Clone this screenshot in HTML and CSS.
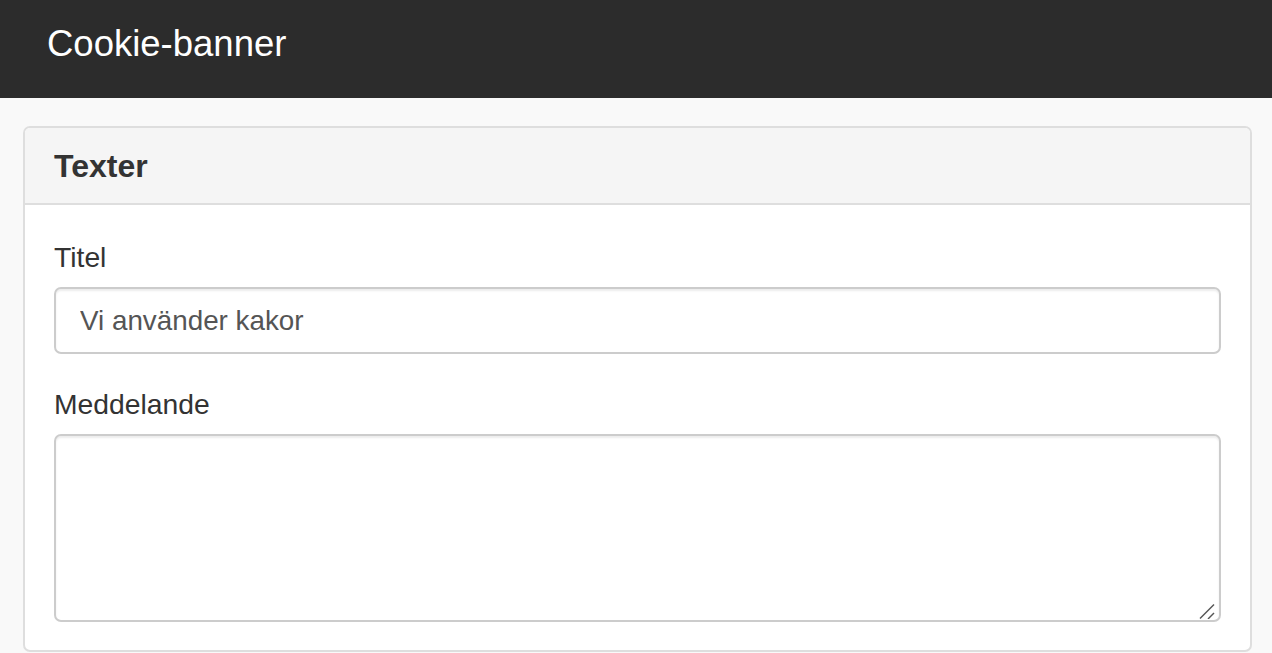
FILE: index.html
```html
<!DOCTYPE html>
<html lang="sv">
<head>
<meta charset="utf-8">
<title>Cookie-banner</title>
<link rel="stylesheet" href="styles.css">
</head>
<body>
<header class="navbar">
  <span class="brand">Cookie-banner</span>
</header>
<main class="main">
  <section class="panel">
    <div class="panel-heading">
      <h2 class="panel-title">Texter</h2>
    </div>
    <div class="panel-body">
      <div class="form-group">
        <label class="label" for="title">Titel</label>
        <input class="control" id="title" type="text" value="Vi använder kakor">
      </div>
      <div class="form-group last">
        <label class="label" for="msg">Meddelande</label>
        <div class="area-wrap">
          <textarea class="control area" id="msg"></textarea>
          <svg class="grip" width="16" height="16" viewBox="0 0 16 16" aria-hidden="true">
            <line x1="1" y1="15.5" x2="15" y2="1.5" stroke="#555" stroke-width="1.4"/>
            <line x1="9" y1="16" x2="15" y2="10" stroke="#555" stroke-width="1.4"/>
          </svg>
        </div>
      </div>
    </div>
  </section>
</main>
</body>
</html>
```
FILE: styles.css
```css
html, body {
  margin: 0;
  padding: 0;
}
body {
  background: #f9f9f9;
  color: #333;
  font-family: "Liberation Sans", Arial, Helvetica, sans-serif;
}
.navbar {
  height: 98px;
  box-sizing: border-box;
  background: #2c2c2c;
  padding: 24px 0 0 47px;
}
.brand {
  display: block;
  color: #fff;
  font-size: 36.5px;
  line-height: 40px;
}
.main {
  padding: 28px 20px 0 23px;
}
.panel {
  background: #fff;
  border: 2px solid #dedede;
  border-radius: 7px;
  overflow: hidden;
}
.panel-heading {
  height: 75px;
  box-sizing: content-box;
  background: #f5f5f5;
  border-bottom: 2px solid #dedede;
  display: flex;
  align-items: center;
  padding: 0 29px;
}
.panel-title {
  margin: 0;
  font-size: 32px;
  font-weight: bold;
  color: #333;
  line-height: 36px;
}
.panel-body {
  padding: 33px 29px 28px 29px;
}
.form-group {
  margin-bottom: 31px;
}
.form-group.last {
  margin-bottom: 0;
}
.label {
  display: block;
  font-size: 28.3px;
  line-height: 38px;
  margin-bottom: 11px;
  color: #333;
}
.control {
  display: block;
  width: 100%;
  box-sizing: border-box;
  height: 67px;
  border: 2px solid #cccccc;
  border-radius: 7px;
  padding: 0 24px;
  font-family: "Liberation Sans", Arial, Helvetica, sans-serif;
  font-size: 27.8px;
  color: #555;
  background: #fff;
  box-shadow: inset 0 2px 2px rgba(0, 0, 0, 0.075);
  outline: none;
  margin: 0;
}
.area-wrap {
  position: relative;
}
.area {
  height: 188px;
  resize: none;
  padding: 12px 24px;
}
.grip {
  position: absolute;
  right: 6px;
  bottom: 3px;
  pointer-events: none;
}
```
